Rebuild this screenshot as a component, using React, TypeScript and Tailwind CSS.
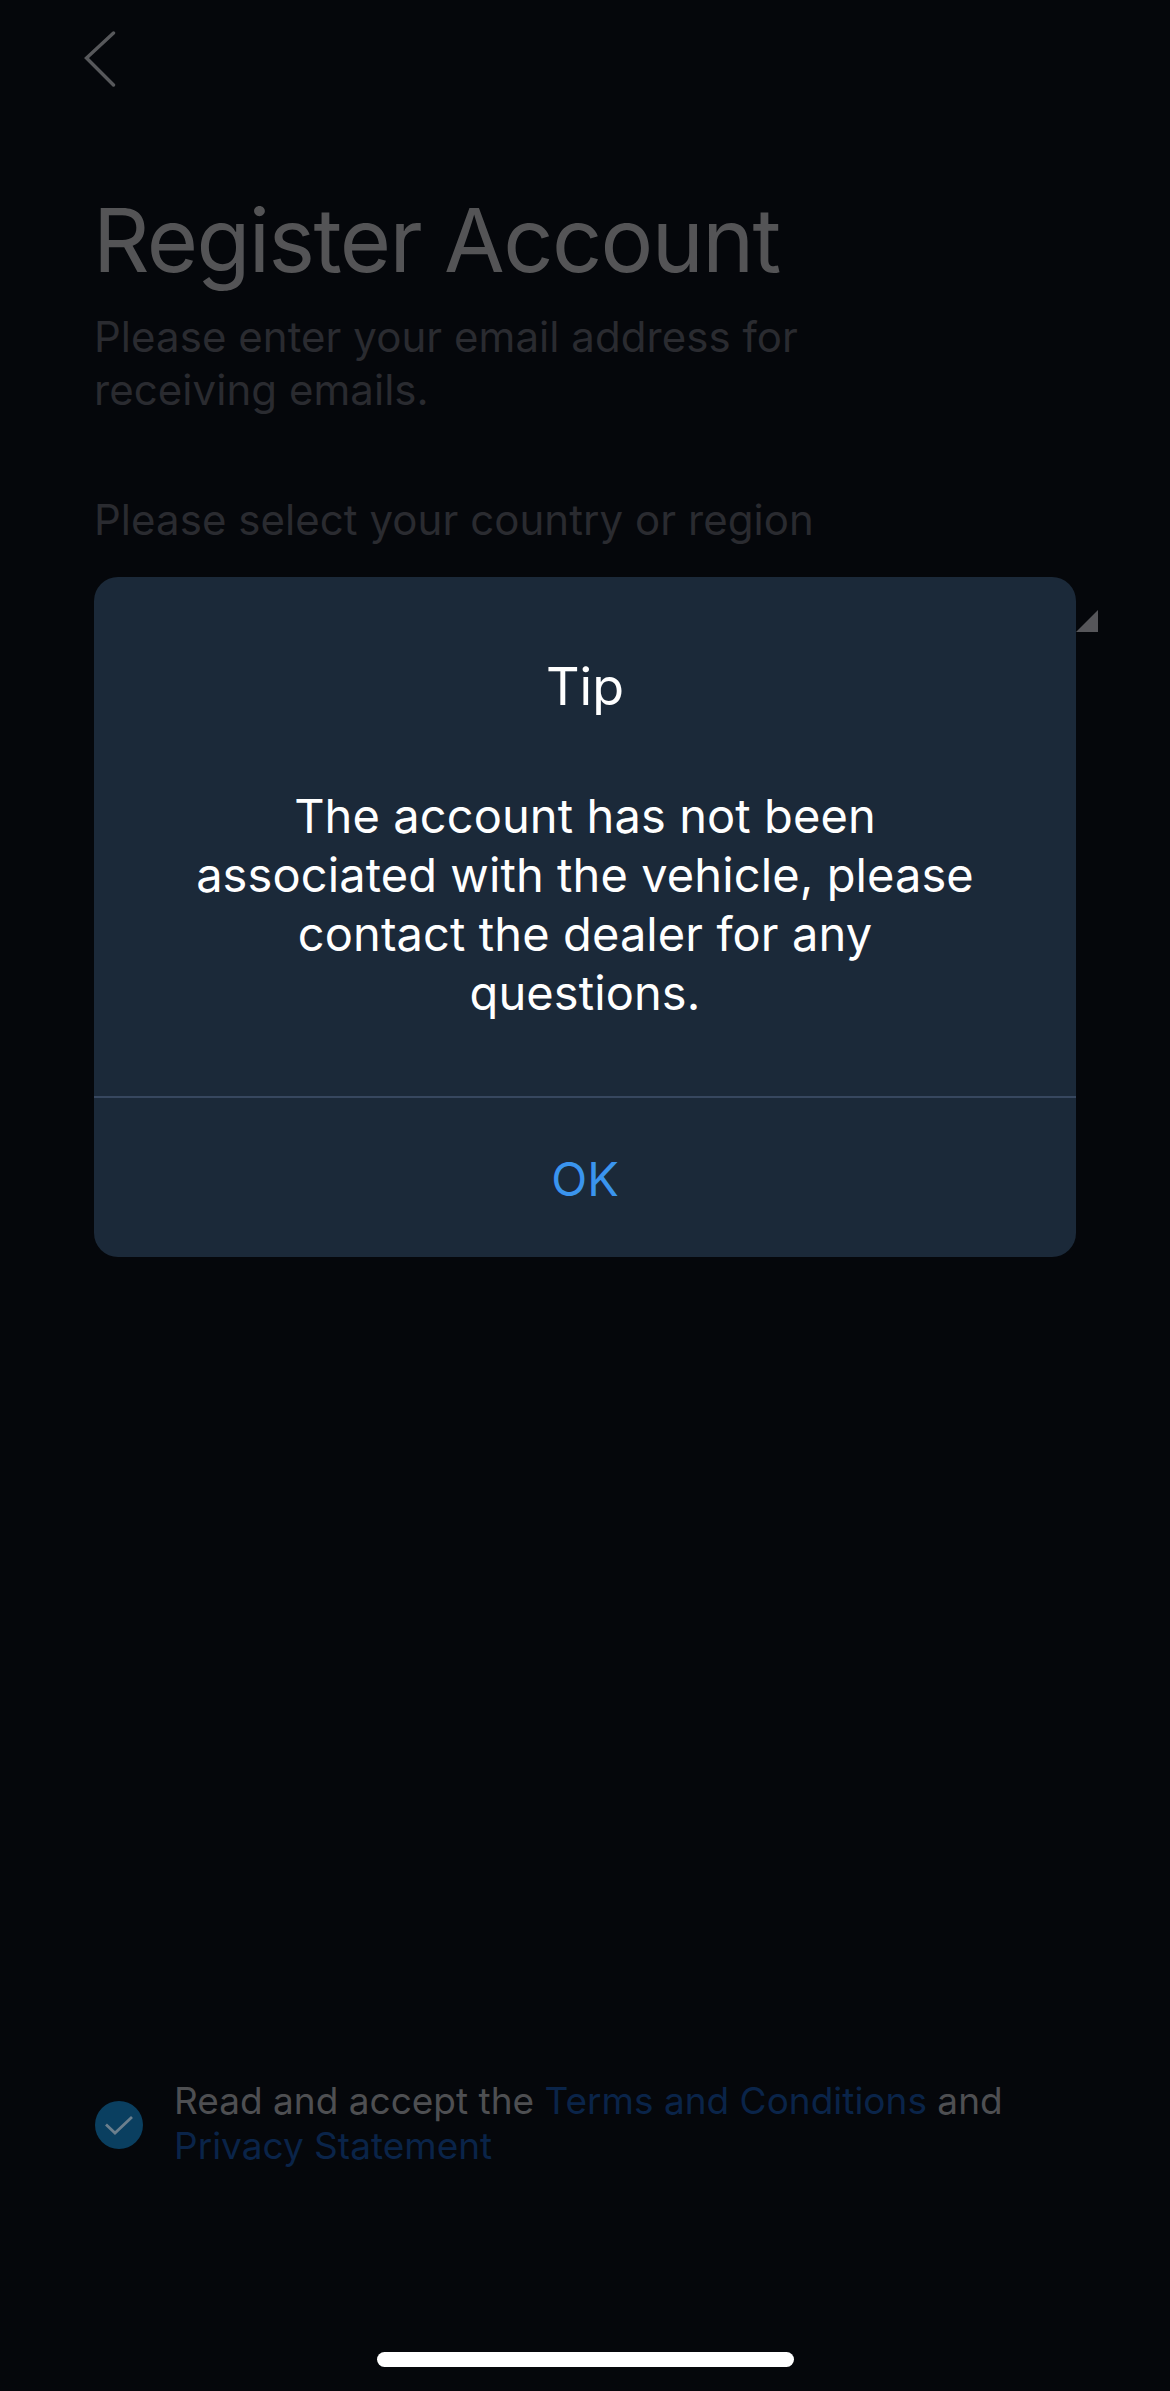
const FONT = "font-['Inter','Noto_Sans',sans-serif]";

function BackIcon() {
  return (
    <svg width="32" height="56" viewBox="0 0 32 56" fill="none" className="block">
      <path d="M29.5 2 L2.5 27 L29.5 54" stroke="#57585b" strokeWidth="3.4" strokeLinecap="round" strokeLinejoin="miter" />
    </svg>
  );
}

function CheckBadge() {
  return (
    <div className="mt-[3px] flex h-[48px] w-[48px] shrink-0 items-center justify-center rounded-full bg-[#0a3f60]">
      <svg width="30" height="20" viewBox="0 0 30 20" fill="none">
        <path d="M2 9.5 L11 18 L28 2" stroke="#6b7f8d" strokeWidth="2.8" />
      </svg>
    </div>
  );
}

function TipDialog() {
  return (
    <div className="absolute left-[94px] top-[577px] flex h-[680px] w-[982px] flex-col rounded-[24px] bg-[#1b2939] text-center">
      <div className="flex-1 px-[60px] pt-[79px]">
        <div className="text-[52px] leading-[62px] text-white">Tip</div>
        <div className="mt-[68px] text-[47px] leading-[59px] tracking-[0.1px] text-white">
          The account has not been
          <br />
          associated with the vehicle, please
          <br />
          contact the dealer for any
          <br />
          questions.
        </div>
      </div>
      <div className="flex h-[161px] items-center justify-center border-t-2 border-[#37475f] pt-[4px] text-[47px] text-[#3a94ee]">
        OK
      </div>
    </div>
  );
}

export default function App() {
  return (
    <div className={`relative flex h-[2391px] w-[1170px] flex-col overflow-hidden bg-[#05070b] ${FONT}`}>
      <div className="pl-[84px] pt-[31px]">
        <BackIcon />
      </div>

      <div className="pl-[95px] pr-[72px] pt-[98px]">
        <h1 className="-ml-[2px] text-[88px] leading-[110px] tracking-[-1.6px] text-[#545456]">Register Account</h1>
        <p className="-ml-[1px] mt-[15px] text-[42px] leading-[53px] tracking-[0.05px] text-[#2a2b30]">
          Please enter your email address for
          <br />
          receiving emails.
        </p>
        <p className="-ml-[1px] mt-[77px] text-[42px] leading-[53px] tracking-[0.05px] text-[#2a2b30]">Please select your country or region</p>
        <div className="flex justify-end pt-[64px]">
          <div className="h-0 w-0 border-b-[22px] border-l-[22px] border-b-[#56565a] border-l-transparent" />
        </div>
      </div>

      <div className="mt-auto flex items-center gap-[31px] pb-[223px] pl-[95px] pr-[100px]">
        <CheckBadge />
        <p className="text-[37px] leading-[45px] text-[#4e4f52]">
          Read and accept the <span className="text-[#0a2449]">Terms and Conditions</span> and
          <br />
          <span className="text-[#0a2449]">Privacy Statement</span>
        </p>
      </div>

      <div className="absolute bottom-[24px] left-[377px] h-[15px] w-[417px] rounded-full bg-white" />

      <TipDialog />
    </div>
  );
}
